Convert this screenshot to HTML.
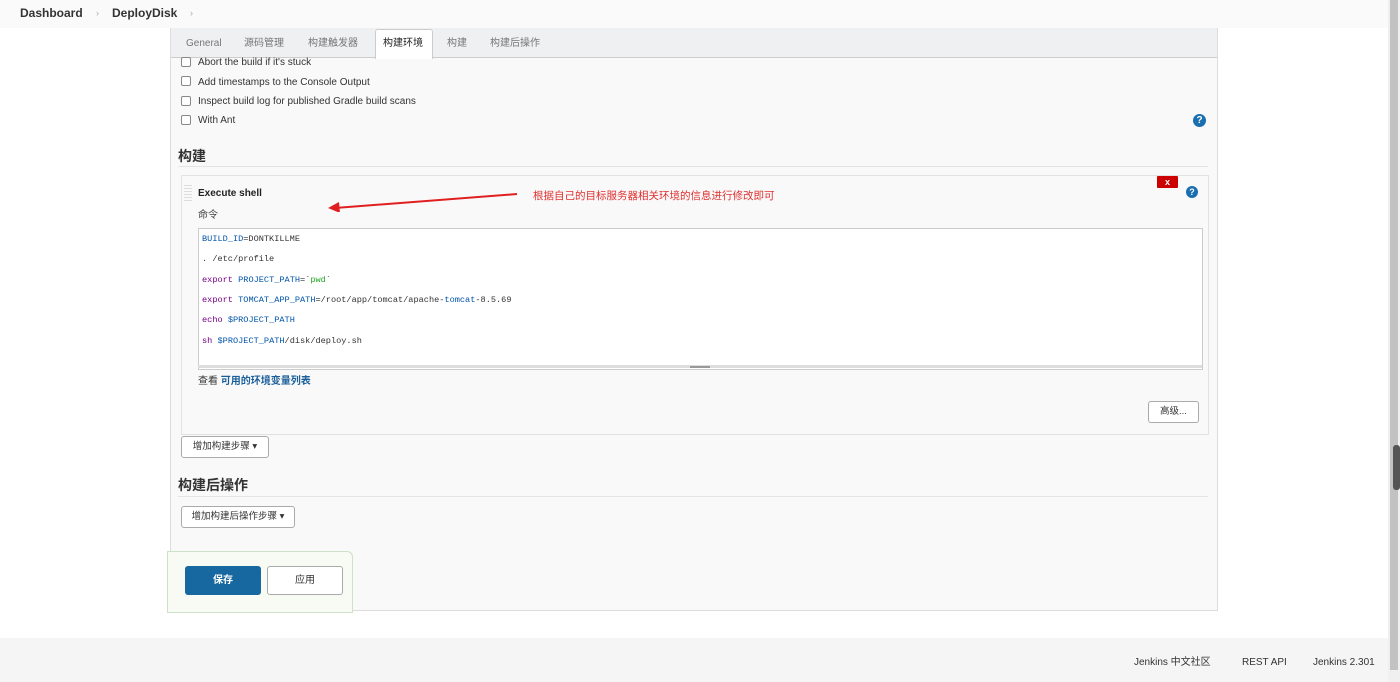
<!DOCTYPE html>
<html><head><meta charset="utf-8"><style>
body{margin:0;width:1400px;height:682px;position:relative;overflow:hidden;background:#fff;font-family:"Liberation Sans","Noto Sans CJK SC",sans-serif;font-size:11px;line-height:13px;color:#333}
.a{position:absolute}
.cb{position:absolute;width:8px;height:8px;border:1px solid #888;border-radius:2px;background:#fff}
.btn{position:absolute;border:1px solid #aaa;border-radius:3px;background:#fff;font-size:9.5px;color:#333;box-sizing:border-box;text-align:center}
.code{font-family:"Liberation Mono","Noto Sans CJK SC",monospace;font-size:8.6px;position:absolute;left:202px;color:#333}
.k{color:#708}.v{color:#05a}.s{color:#2a2}
</style></head><body>
<div class="a" style="left:0;top:0;width:1388px;height:28px;background:#fafafa"></div>
<div class="a" style="left:20px;top:7px;font-weight:bold;font-size:12px;color:#333">Dashboard</div>
<div class="a" style="left:96px;top:7px;font-size:9px;color:#aaa">›</div>
<div class="a" style="left:112px;top:7px;font-weight:bold;font-size:12px;color:#333">DeployDisk</div>
<div class="a" style="left:190px;top:7px;font-size:9px;color:#aaa">›</div>

<div class="a" style="left:170px;top:28px;width:1046px;height:582px;background:#f9f9f9;border:1px solid #ddd;border-top:none"></div>
<div class="a" style="left:171px;top:28px;width:1046px;height:29px;background:#eef0f2;border-bottom:1px solid #ccc"></div>
<div class="a" style="left:375px;top:29px;width:56px;height:29px;background:#fff;border:1px solid #ccc;border-bottom:none;border-radius:3px 3px 0 0"></div>
<div class="a" style="left:186px;top:37px;color:#777;font-size:10px">General</div>
<div class="a" style="left:244px;top:37px;color:#777;font-size:10px">源码管理</div>
<div class="a" style="left:308px;top:37px;color:#777;font-size:10px">构建触发器</div>
<div class="a" style="left:383px;top:37px;color:#222;font-size:10px">构建环境</div>
<div class="a" style="left:447px;top:37px;color:#777;font-size:10px">构建</div>
<div class="a" style="left:490px;top:37px;color:#777;font-size:10px">构建后操作</div>

<div class="cb" style="left:181px;top:57px"></div><div class="a" style="left:198px;top:56px;font-size:10px">Abort the build if it's stuck</div>
<div class="cb" style="left:181px;top:76px"></div><div class="a" style="left:198px;top:76px;font-size:10px">Add timestamps to the Console Output</div>
<div class="cb" style="left:181px;top:96px"></div><div class="a" style="left:198px;top:95px;font-size:10px">Inspect build log for published Gradle build scans</div>
<div class="cb" style="left:181px;top:115px"></div><div class="a" style="left:198px;top:114px;font-size:10px">With Ant</div>
<div class="a" style="left:1193px;top:114px;width:13px;height:13px;border-radius:50%;background:#1a6fb0;color:#fff;font-weight:bold;font-size:10px;text-align:center;line-height:13px">?</div>

<div class="a" style="left:178px;top:148px;font-size:14px;line-height:16px;font-weight:bold;color:#333">构建</div>
<div class="a" style="left:178px;top:166px;width:1030px;height:1px;background:#e4e4e4"></div>

<div class="a" style="left:181px;top:175px;width:1026px;height:258px;border:1px solid #e2e2e2;background:#f9f9f9"></div>
<div class="a" style="left:184px;top:185px;width:8px;height:18px;background:repeating-linear-gradient(#ddd 0 1px,transparent 1px 3px)"></div>
<div class="a" style="left:198px;top:187px;font-weight:bold;font-size:10px;color:#222">Execute shell</div>
<div class="a" style="left:198px;top:209px;font-size:10px;color:#444">命令</div>
<div class="a" style="left:1157px;top:176px;width:21px;height:12px;background:#c00;color:#fff;font-weight:bold;font-size:9px;text-align:center;line-height:12px;border-radius:1px">x</div>
<div class="a" style="left:1186px;top:186px;width:12px;height:12px;border-radius:50%;background:#1a6fb0;color:#fff;font-weight:bold;font-size:9px;text-align:center;line-height:12px">?</div>
<svg class="a" style="left:325px;top:190px" width="195" height="22"><line x1="192" y1="4" x2="10" y2="18" stroke="#e02020" stroke-width="2"/><polygon points="3,18 14,12 15,23" fill="#e02020"/></svg>
<div class="a" style="left:533px;top:190px;font-size:10.5px;color:#e03030">根据自己的目标服务器相关环境的信息进行修改即可</div>

<div class="a" style="left:198px;top:228px;width:1003px;height:140px;background:#fff;border:1px solid #ccc"></div>
<div class="a" style="left:198px;top:365px;width:1004px;height:3px;background:#ddd"></div>
<div class="a" style="left:690px;top:366px;width:20px;height:2px;background:#999"></div>
<div class="code" style="top:233px"><span class="v">BUILD_ID</span>=DONTKILLME</div>
<div class="code" style="top:253px">. /etc/profile</div>
<div class="code" style="top:274px"><span class="k">export</span> <span class="v">PROJECT_PATH</span>=`<span class="s">pwd</span>`</div>
<div class="code" style="top:294px"><span class="k">export</span> <span class="v">TOMCAT_APP_PATH</span>=/root/app/tomcat/apache-<span class="v">tomcat</span>-8.5.69</div>
<div class="code" style="top:314px"><span class="k">echo</span> <span class="v">$PROJECT_PATH</span></div>
<div class="code" style="top:335px"><span class="k">sh</span> <span class="v">$PROJECT_PATH</span>/disk/deploy.sh</div>
<div class="a" style="left:198px;top:375px;font-size:10px;color:#333">查看 <span style="color:#1a5f9a;font-weight:bold">可用的环境变量列表</span></div>
<div class="btn" style="left:1148px;top:401px;width:51px;height:22px;line-height:20px">高级...</div>

<div class="btn" style="left:181px;top:436px;width:88px;height:22px;line-height:20px">增加构建步骤 ▾</div>
<div class="a" style="left:178px;top:477px;font-size:14px;line-height:16px;font-weight:bold;color:#333">构建后操作</div>
<div class="a" style="left:178px;top:496px;width:1030px;height:1px;background:#e4e4e4"></div>
<div class="btn" style="left:181px;top:506px;width:114px;height:22px;line-height:20px">增加构建后操作步骤 ▾</div>

<div class="a" style="left:167px;top:551px;width:186px;height:62px;background:#f8faf4;border:1px solid #cde0c8;border-radius:0 6px 0 0;box-sizing:border-box"></div>
<div class="a" style="left:185px;top:566px;width:76px;height:29px;background:#1768a0;border-radius:3px;color:#fff;font-weight:bold;font-size:10px;text-align:center;line-height:29px">保存</div>
<div class="btn" style="left:267px;top:566px;width:76px;height:29px;line-height:27px;font-size:10px">应用</div>

<div class="a" style="left:0;top:638px;width:1388px;height:44px;background:#f5f5f5"></div>
<div class="a" style="left:1134px;top:656px;font-size:10px;color:#333">Jenkins 中文社区</div>
<div class="a" style="left:1242px;top:656px;font-size:10px;color:#333">REST API</div>
<div class="a" style="left:1313px;top:656px;font-size:10px;color:#333">Jenkins 2.301</div>
<div class="a" style="left:1388px;top:0;width:12px;height:682px;background:#f0f0f0"></div>
<div class="a" style="left:1390px;top:0;width:8px;height:670px;background:#c2c2c2"></div>
<div class="a" style="left:1393px;top:445px;width:7px;height:45px;background:#555;border-radius:3px"></div>
</body></html>
